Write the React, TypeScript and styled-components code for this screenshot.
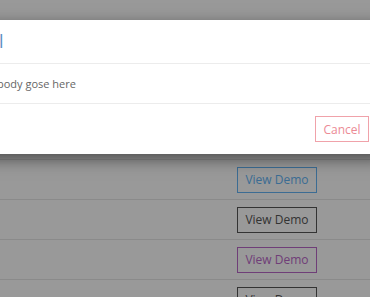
import React from "react";
import styled, { createGlobalStyle } from "styled-components";

const GlobalStyle = createGlobalStyle`
  html, body {
    margin: 0;
    padding: 0;
    background: #ffffff;
    font-family: "Open Sans", "Liberation Sans", sans-serif;
    overflow: hidden;
  }
`;

const Page = styled.div`
  position: relative;
  width: 370px;
  height: 297px;
  overflow: hidden;
  background: #ffffff;
`;

const Table = styled.div`
  display: flex;
  flex-direction: column;
  padding-top: 120px;
`;

const Row = styled.div`
  display: flex;
  align-items: center;
  height: 39px;
  border-bottom: 1px solid #e6e6e6;
`;

const NameCell = styled.div`
  flex: 1;
  padding-left: 20px;
  font-size: 13px;
  color: #555;
`;

const ActionCell = styled.div`
  width: 133px;
  display: flex;
  align-items: center;
`;

const DemoButton = styled.button<{ $tone: string }>`
  width: 80px;
  height: 26px;
  background: #fff;
  border: 1px solid ${(p) => p.$tone};
  color: ${(p) => p.$tone};
  font-family: "Open Sans", "Liberation Sans", sans-serif;
  font-size: 12px;
  font-weight: 500;
  padding: 0;
`;

const Backdrop = styled.div`
  position: absolute;
  inset: 0;
  background: rgba(0, 0, 0, 0.4);
`;

const Modal = styled.div`
  position: absolute;
  top: 20px;
  left: -18px;
  right: -14px;
  background: #ffffff;
  box-shadow: 0 5px 15px rgba(0, 0, 0, 0.5);
  display: flex;
  flex-direction: column;
`;

const ModalHeader = styled.div`
  padding: 12px 15px;
  border-bottom: 1px solid #ececec;
`;

const ModalTitle = styled.h4`
  margin: 0;
  font-size: 18px;
  line-height: 19px;
  font-weight: 400;
  color: #5b8fc4;
  padding-left: 2px;
`;

const ModalBody = styled.div`
  padding: 11px 15px;
  font-size: 11px;
  line-height: 17px;
  color: #666;
  border-bottom: 1px solid #ececec;
`;

const ModalFooter = styled.div`
  display: flex;
  justify-content: flex-end;
  padding: 12px 15px;
`;

const CancelButton = styled.button`
  width: 54px;
  height: 26px;
  background: #fff;
  border: 1px solid #f0a2aa;
  color: #ec8b95;
  font-family: "Open Sans", "Liberation Sans", sans-serif;
  font-size: 12px;
  padding: 0;
`;

const rows = ["#64b5f6", "#555555", "#ba68c8", "#555555"];

export default function App() {
  return (
    <Page>
      <GlobalStyle />
      <Table>
        <Row>
          <NameCell />
          <ActionCell />
        </Row>
        {rows.map((tone, i) => (
          <Row key={i}>
            <NameCell />
            <ActionCell>
              <DemoButton $tone={tone}>View Demo</DemoButton>
            </ActionCell>
          </Row>
        ))}
      </Table>
      <Backdrop />
      <Modal>
        <ModalHeader>
          <ModalTitle>l</ModalTitle>
        </ModalHeader>
        <ModalBody>body gose here</ModalBody>
        <ModalFooter>
          <CancelButton>Cancel</CancelButton>
        </ModalFooter>
      </Modal>
    </Page>
  );
}
